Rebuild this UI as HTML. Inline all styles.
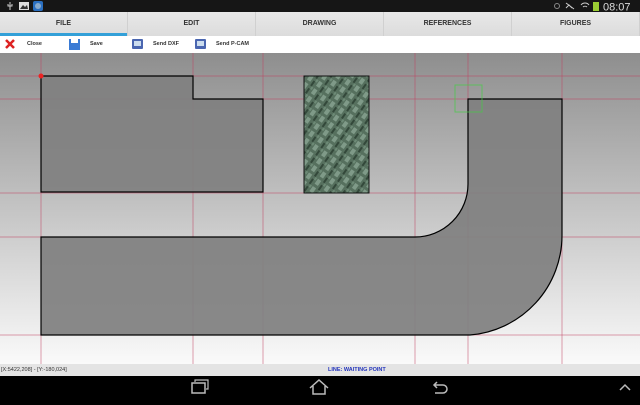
<!DOCTYPE html>
<html><head><meta charset="utf-8"><style>
*{margin:0;padding:0;box-sizing:border-box}
body{width:640px;height:400px;overflow:hidden;font-family:"Liberation Sans",sans-serif;background:#000;position:relative}
.sb{position:absolute;left:0;top:0;width:640px;height:12px;background:#161616}
.tabs{position:absolute;top:12px;left:0;width:640px;height:24px;background:linear-gradient(#e8e8e8,#dcdcdc);display:flex}
.tabs div{flex:1;text-align:center;font-size:7px;font-weight:bold;color:#333;line-height:24px;border-right:1px solid #d0d0d0}
.ul{position:absolute;left:0;top:33px;width:127px;height:3px;background:#33a0d8}
.tb{position:absolute;top:36px;left:0;width:640px;height:17px;background:#fff}
.tb span{position:absolute;top:5px;font-size:5.5px;font-weight:bold;color:#333}
.st{position:absolute;top:364px;left:0;width:640px;height:12px;background:#e4e4e4;font-size:5.5px}
.nav{position:absolute;top:376px;left:0;width:640px;height:24px;background:#000}
</style></head><body>
<div class="sb">
<svg width="640" height="12" style="position:absolute;left:0;top:0">
<path d="M10 2v8M8 4v2h4V4" stroke="#ccc" stroke-width="1" fill="none"/>
<rect x="19" y="2" width="10" height="8" fill="#ddd"/><path d="M20 9l3-4 2 2 2-2 1 4z" fill="#333"/>
<rect x="33" y="1" width="10" height="10" rx="2" fill="#2a6fc0"/><circle cx="38" cy="6" r="3" fill="#8ac"/>
<circle cx="557" cy="6" r="2.5" fill="none" stroke="#888"/>
<path d="M566 3l8 6M566 8l3-3 3 3" stroke="#ccc" fill="none"/>
<path d="M581 5a5 5 0 0 1 8 0M583 7a3 3 0 0 1 4 0" stroke="#ccc" fill="none"/>
<rect x="593" y="2" width="6" height="9" fill="#9c3"/>
<text x="603" y="10.5" font-size="11" fill="#ddd" font-family="Liberation Sans">08:07</text>
</svg></div>
<div class="tabs"><div>FILE</div><div>EDIT</div><div>DRAWING</div><div>REFERENCES</div><div>FIGURES</div></div>
<div class="ul"></div>
<div class="tb">
<svg width="640" height="17" style="position:absolute;left:0;top:0">
<path d="M6 4l8 8M14 4l-8 8" stroke="#d22" stroke-width="2.5"/>
<rect x="69" y="3" width="11" height="11" fill="#3a7bd5"/><rect x="71" y="3" width="7" height="4" fill="#fff"/>
<rect x="132" y="3" width="11" height="10" rx="1" fill="#4a66b0"/><rect x="134" y="5" width="7" height="5" fill="#cde"/>
<rect x="195" y="3" width="11" height="10" rx="1" fill="#4a66b0"/><rect x="197" y="5" width="7" height="5" fill="#cde"/>
</svg>
<span style="left:27px">Close</span><span style="left:90px">Save</span><span style="left:153px">Send DXF</span><span style="left:216px">Send P-CAM</span>
</div>
<svg width="640" height="311" viewBox="0 53 640 311" style="position:absolute;left:0;top:53px">
<defs><linearGradient id="g" x1="0" y1="0" x2="0" y2="1"><stop offset="0" stop-color="#8e8e8e"/><stop offset="0.5" stop-color="#c4c4c4"/><stop offset="1" stop-color="#fafafa"/></linearGradient>
<pattern id="p" width="11" height="9" patternUnits="userSpaceOnUse" patternTransform="rotate(35)"><rect width="11" height="9" fill="#56705e"/><rect width="4" height="6" fill="#7f9a88"/><rect x="6" y="3" width="2" height="6" fill="#33483a"/><rect x="8" y="0" width="2" height="3" fill="#6d8a76"/></pattern></defs>
<rect x="0" y="53" width="640" height="311" fill="url(#g)"/>
<g stroke="#c04060" stroke-opacity="0.5" stroke-width="1">
<path d="M41 53V364M193 53V364M263 53V364M415 53V364M468 53V364M562 53V364"/>
<path d="M0 76H640M0 99H640M0 193H640M0 237H640M0 335H640"/>
</g>
<path d="M41 76H193V99H263V192H41Z" fill="#808080" fill-opacity="0.93" stroke="#000" stroke-width="1.2"/>
<path d="M468 99H562V235A100 100 0 0 1 470 335H41V237H415A53 53 0 0 0 468 184Z" fill="#808080" fill-opacity="0.93" stroke="#000" stroke-width="1.2"/>
<rect x="304" y="76" width="65" height="117" fill="url(#p)" stroke="#111"/>
<circle cx="41" cy="76" r="2.5" fill="#e22"/>
<rect x="455" y="85" width="27" height="27" fill="none" stroke="#4c4" stroke-opacity="0.7"/>
</svg>
<div class="st"><span style="position:absolute;left:1px;top:3px;color:#333">[X:5422,208] - [Y:-180,024]</span><span style="position:absolute;left:328px;top:3px;color:#2233bb;font-weight:bold">LINE: WAITING POINT</span></div>
<div class="nav"><svg width="640" height="24">
<rect x="192" y="7" width="13" height="10" fill="none" stroke="#bbb" stroke-width="1.5"/><path d="M195 6V4h13v9h-2" fill="none" stroke="#bbb" stroke-width="1.2"/>
<path d="M310 12l9-8 9 8M313 10v8h12v-8" fill="none" stroke="#bbb" stroke-width="1.5"/>
<path d="M437 6l-3 3 3 3M434 9h9a4 4 0 0 1 0 8h-8" fill="none" stroke="#bbb" stroke-width="1.5"/>
<path d="M620 14l5-5 5 5" fill="none" stroke="#bbb" stroke-width="1.5"/>
</svg></div>
</body></html>
